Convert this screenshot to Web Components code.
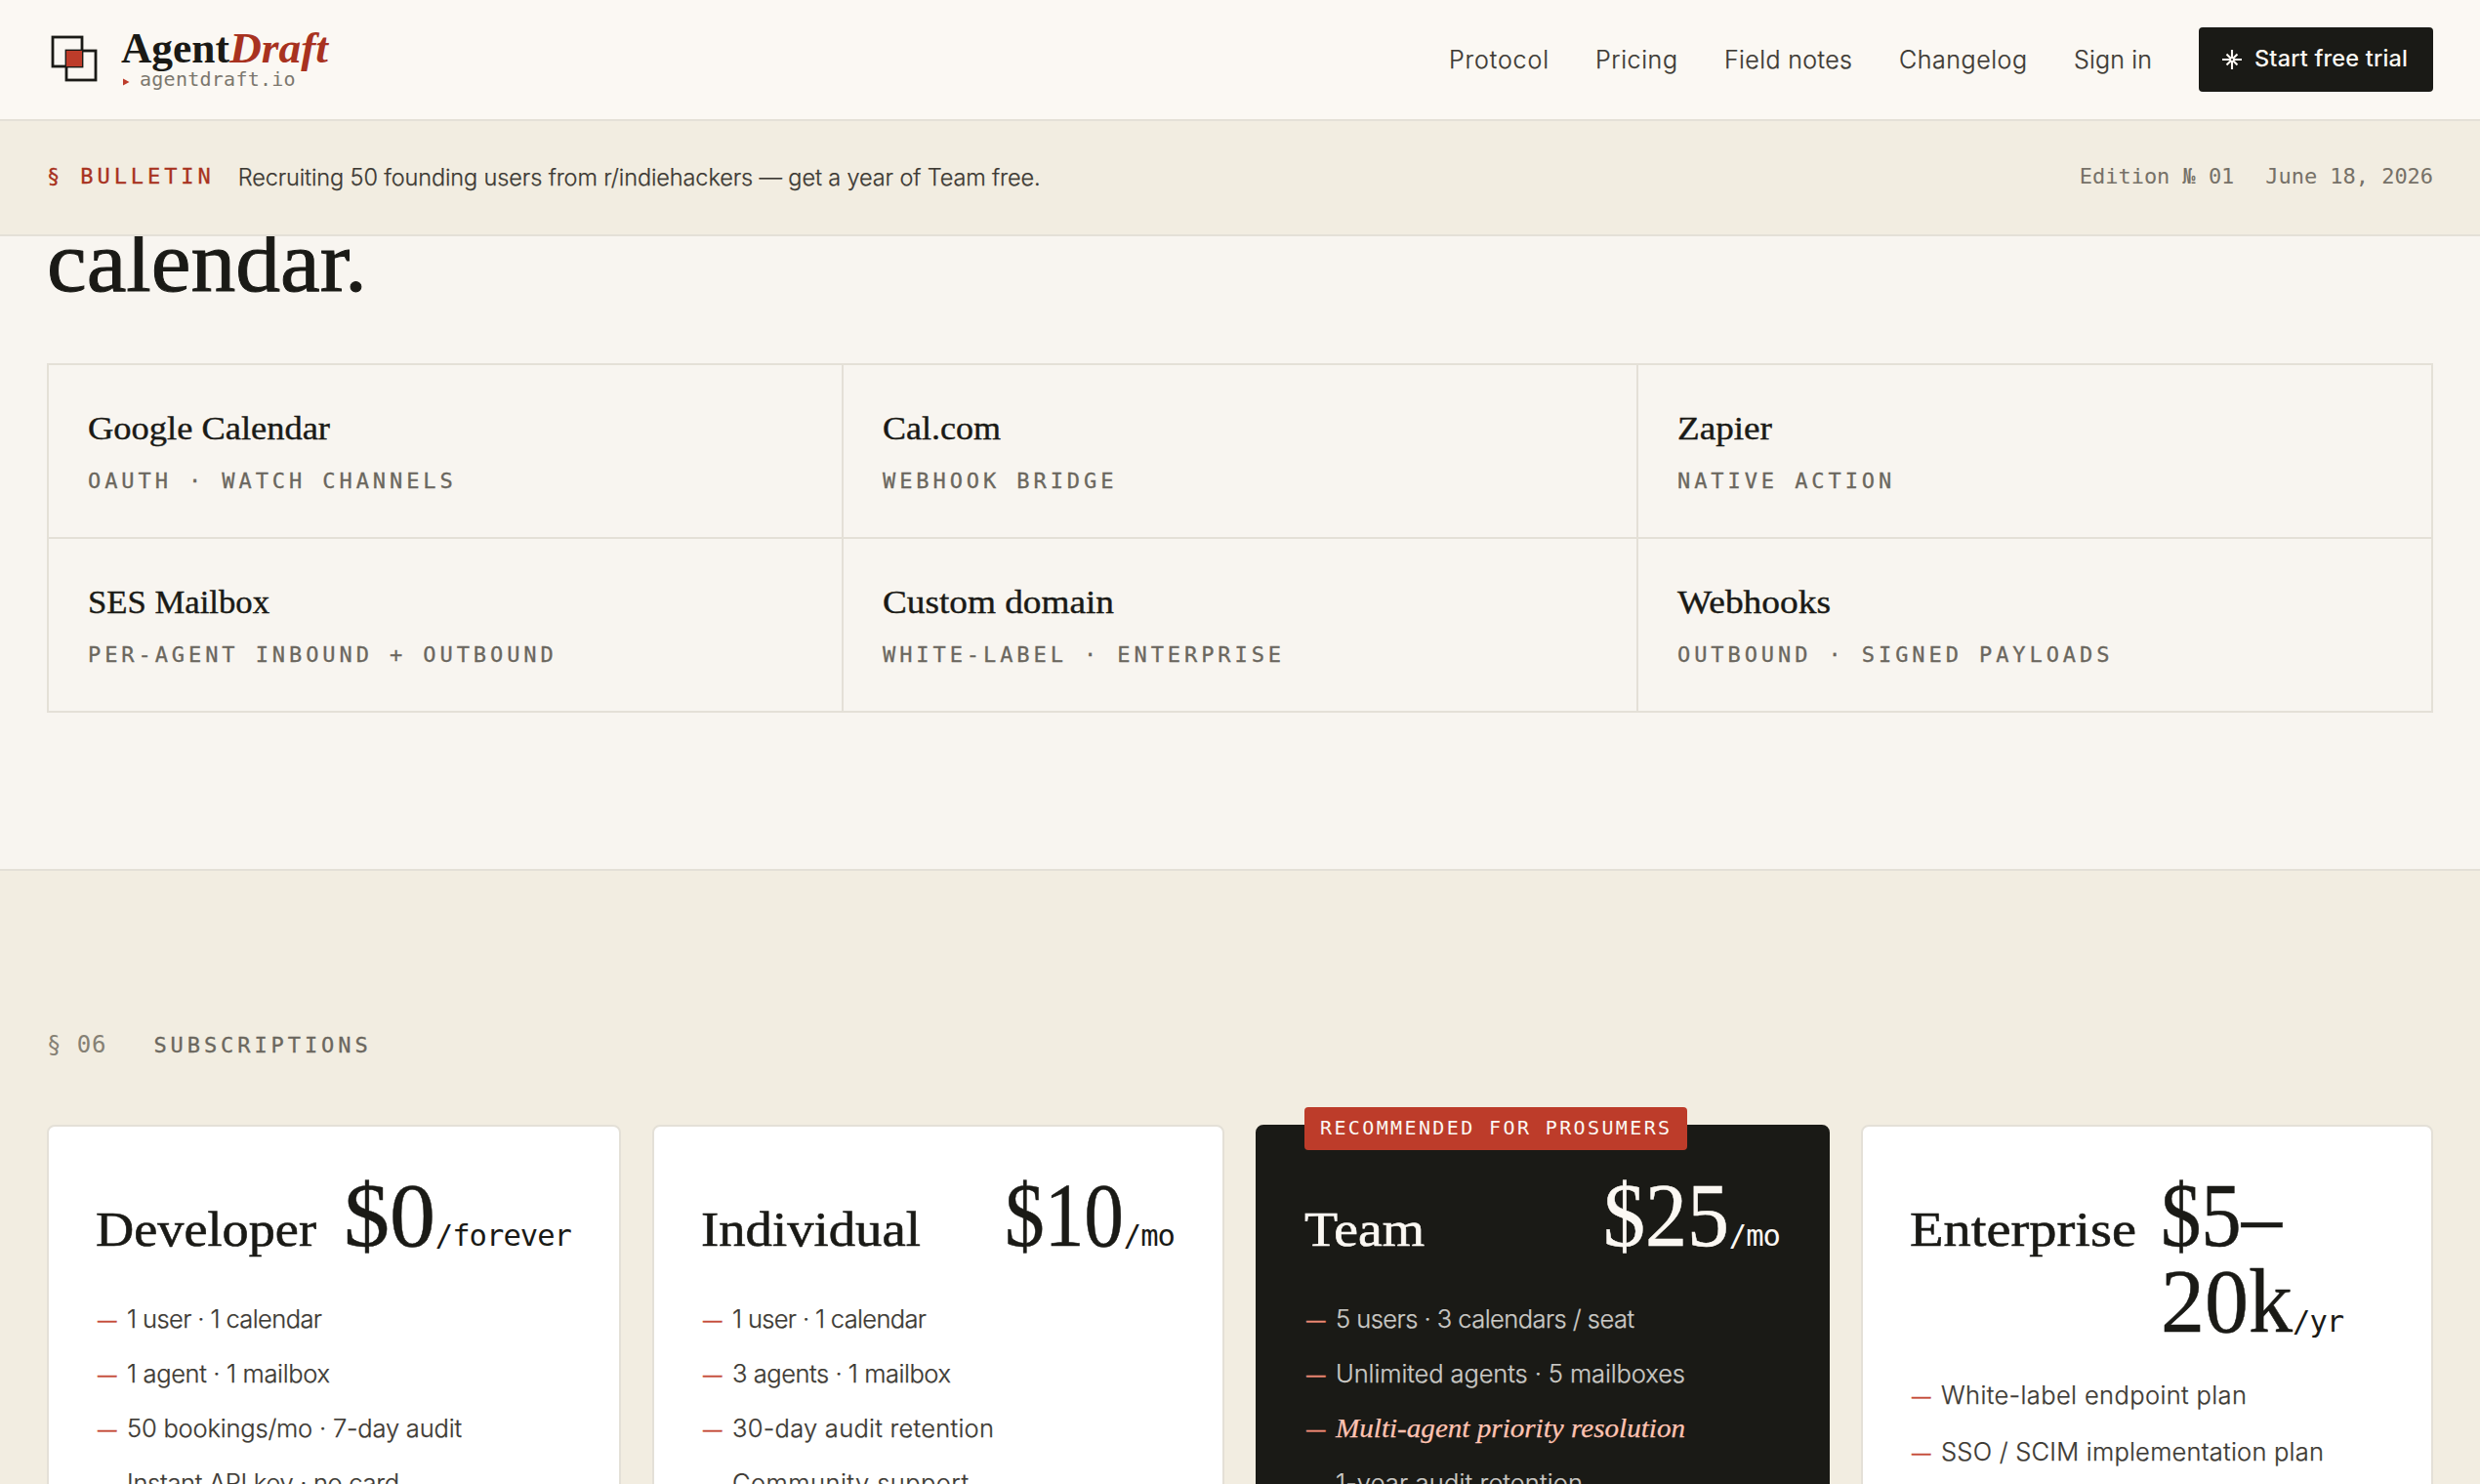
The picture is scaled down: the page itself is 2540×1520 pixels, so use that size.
<!DOCTYPE html>
<html lang="en">
<head>
<meta charset="utf-8">
<title>AgentDraft</title>
<style>
    :root {
        --ink: #1a1a16;
        --body: #3d3a34;
        --muted: #6b675e;
        --red: #bd3c2a;
        --red-deep: #a83220;
        --paper: #fbf8f3;
        --page: #f8f5f0;
        --sand: #f2ede1;
        --line: #e4e0d7;
        --serif: "Liberation Serif", serif;
        --sans: Inter, "Liberation Sans", sans-serif;
        --mono: "DejaVu Sans Mono", "Liberation Mono", monospace;
    }
    body {
        margin: 0;
        height: 1520px;
        overflow: hidden;
        background: var(--page);
        color: var(--ink);
        font-family: var(--sans);
    }
</style>
</head>
<body>

<site-header></site-header>
<site-bulletin></site-bulletin>

<channel-section>
    <fit-text slot="title" w="328" stretch>calendar.</fit-text>
    <channel-cell><fit-text slot="name" w="248" stretch>Google Calendar</fit-text>OAUTH · WATCH CHANNELS</channel-cell>
    <channel-cell><fit-text slot="name" w="121" stretch>Cal.com</fit-text>WEBHOOK BRIDGE</channel-cell>
    <channel-cell><fit-text slot="name" w="97" stretch>Zapier</fit-text>NATIVE ACTION</channel-cell>
    <channel-cell><fit-text slot="name" w="186" stretch>SES Mailbox</fit-text>PER-AGENT INBOUND + OUTBOUND</channel-cell>
    <channel-cell><fit-text slot="name" w="237" stretch>Custom domain</fit-text>WHITE-LABEL · ENTERPRISE</channel-cell>
    <channel-cell><fit-text slot="name" w="157" stretch>Webhooks</fit-text>OUTBOUND · SIGNED PAYLOADS</channel-cell>
</channel-section>

<pricing-section>
    <plan-card>
        <fit-text slot="name" w="226" stretch>Developer</fit-text>
        <fit-text slot="price" w="94" stretch>$0</fit-text>
        <span slot="unit">/forever</span>
        <plan-item><fit-text w="200">1 user · 1 calendar</fit-text></plan-item>
        <plan-item><fit-text w="208">1 agent · 1 mailbox</fit-text></plan-item>
        <plan-item><fit-text w="343">50 bookings/mo · 7-day audit</fit-text></plan-item>
        <plan-item><fit-text w="279">Instant API key · no card</fit-text></plan-item>
    </plan-card>
    <plan-card>
        <fit-text slot="name" w="225" stretch>Individual</fit-text>
        <fit-text slot="price" w="122" stretch>$10</fit-text>
        <span slot="unit">/mo</span>
        <plan-item><fit-text w="199">1 user · 1 calendar</fit-text></plan-item>
        <plan-item><fit-text w="224">3 agents · 1 mailbox</fit-text></plan-item>
        <plan-item><fit-text w="268">30-day audit retention</fit-text></plan-item>
        <plan-item><fit-text w="242">Community support</fit-text></plan-item>
    </plan-card>
    <plan-card class="featured">
        <span slot="badge">RECOMMENDED FOR PROSUMERS</span>
        <fit-text slot="name" w="123" stretch>Team</fit-text>
        <fit-text slot="price" w="129" stretch>$25</fit-text>
        <span slot="unit">/mo</span>
        <plan-item><fit-text w="306">5 users · 3 calendars / seat</fit-text></plan-item>
        <plan-item><fit-text w="358">Unlimited agents · 5 mailboxes</fit-text></plan-item>
        <plan-item class="strong"><fit-text w="358" stretch>Multi-agent priority resolution</fit-text></plan-item>
        <plan-item><fit-text w="253">1-year audit retention</fit-text></plan-item>
    </plan-card>
    <plan-card class="wide">
        <fit-text slot="name" w="232" stretch>Enterprise</fit-text>
        <fit-text slot="price" w="124" stretch>$5–</fit-text>
        <fit-text slot="price2" w="135" stretch>20k</fit-text>
        <span slot="unit">/yr</span>
        <plan-item><fit-text w="313">White-label endpoint plan</fit-text></plan-item>
        <plan-item><fit-text w="392">SSO / SCIM implementation plan</fit-text></plan-item>
    </plan-card>
</pricing-section>

<script>
// attach an open shadow root and fill it
function build(el, html) {
    const template = document.createElement("template");
    template.innerHTML = html;
    el.attachShadow({ mode: "open" }).appendChild(template.content.cloneNode(true));
}

class SiteHeader extends HTMLElement {
    constructor() {
        super();
        build(this, `
<style>
    :host { display: flex; align-items: center; justify-content: space-between; box-sizing: border-box;
        height: 124px; padding: 0 48px; background: var(--paper); border-bottom: 2px solid var(--line); }
    .brand, nav, .cta { display: flex; align-items: center; }
    .brand { gap: 20px; }
    .brand > svg { display: block; margin-top: -2px; }
    .word { font: 700 44px/42px var(--serif); height: 40px; display: flex; }
    .word em { color: var(--red-deep); }
    .tag { display: flex; align-items: center; gap: 10px; height: 24px; font: 20px/24px var(--mono);
        color: #7b776e; letter-spacing: .26px; padding-left: 2px; }
    .tag svg { margin-top: 6px; }
    nav { gap: 48px; font-size: 25px; font-weight: 350; line-height: 40px; color: var(--body);
        -webkit-text-stroke: .25px; }
    .cta { box-sizing: border-box; width: 240px; height: 66px; padding: 0 0 2px 24px; gap: 13px;
        background: var(--ink); color: var(--paper); border-radius: 4px; font-size: 23.5px; font-weight: 500;
        -webkit-text-stroke: 0; }
    .cta svg { margin-top: 1px; }
</style>
<div class="brand">
    <svg width="56" height="56" viewBox="0 0 28 28" fill="none" stroke="#1a1a16" stroke-width="1.4">
        <rect x="3" y="3" width="15" height="15"/>
        <rect x="10" y="10" width="15" height="15"/>
        <rect x="10" y="10" width="8" height="8" fill="#bd3c2a" stroke="none"/>
    </svg>
    <div>
        <div class="word"><fit-text w="111" stretch>Agent</fit-text><em><fit-text w="101" stretch>Draft</fit-text></em></div>
        <div class="tag"><svg width="7" height="8"><path d="M0 .5 6.5 4 0 7.5z" fill="#bd3c2a"/></svg><span>agentdraft.io</span></div>
    </div>
</div>
<nav>
    <fit-text w="102">Protocol</fit-text>
    <fit-text w="84">Pricing</fit-text>
    <fit-text w="131">Field notes</fit-text>
    <fit-text w="131">Changelog</fit-text>
    <fit-text w="80">Sign in</fit-text>
    <div class="cta">
        <svg width="20" height="20" viewBox="-10 -10 20 20" stroke="#fbf8f3" stroke-width="2.1" fill="#1a1a16">
            <path d="M0-10V10M-10 0H10M-5.5-5.5 5.5 5.5M5.5-5.5-5.5 5.5"/>
            <circle r="1" stroke="none"/>
        </svg>
        <fit-text w="157">Start free trial</fit-text>
    </div>
</nav>`);
    }
}

class SiteBulletin extends HTMLElement {
    constructor() {
        super();
        build(this, `
<style>
    :host { display: flex; align-items: center; box-sizing: border-box; height: 118px; padding: 0 48px;
        background: var(--sand); border-bottom: 2px solid var(--line); font-size: 23.5px; font-weight: 350;
        color: var(--body); }
    .mono { font: 22px/30px var(--mono); padding-bottom: 3px; letter-spacing: -.04px; color: #767168; }
    .label { color: var(--red-deep); letter-spacing: 3.92px; margin-right: 24px; -webkit-text-stroke: .3px; }
    .right { margin-left: auto; display: flex; gap: 32px; }
    fit-text { padding-bottom: 2px; -webkit-text-stroke: .25px; }
</style>
<span class="mono label">§ BULLETIN</span>
<fit-text w="822">Recruiting 50 founding users from r/indiehackers — get a year of Team free.</fit-text>
<div class="right"><span class="mono">Edition № 01</span><span class="mono">June 18, 2026</span></div>`);
    }
}

class ChannelSection extends HTMLElement {
    constructor() {
        super();
        build(this, `
<style>
    :host { display: block; overflow: hidden; padding: 0 48px 160px; }
    /* short line box: the sticky bars cover the top of the heading */
    h2 { margin: 0 0 77px; font: 400 89px/53px var(--serif); height: 53px; -webkit-text-stroke: 1px; }
    .grid { display: grid; grid-template-columns: repeat(3, 1fr); grid-auto-rows: 176px; gap: 2px;
        padding: 2px; background: var(--line); }
</style>
<h2><slot name="title"></slot></h2>
<div class="grid"><slot></slot></div>`);
    }
}

class ChannelCell extends HTMLElement {
    constructor() {
        super();
        build(this, `
<style>
    :host { display: block; box-sizing: border-box; padding: 45px 40px 0; background: var(--page); }
    h3 { margin: 0 0 19px; height: 40px; font: 400 34px/40px var(--serif); -webkit-text-stroke: .4px; }
    p { margin: 0; font: 22px/30px var(--mono); letter-spacing: 3.92px; color: var(--muted);
        -webkit-text-stroke: .3px; }
</style>
<h3><slot name="name"></slot></h3>
<p><slot></slot></p>`);
    }
}

class PricingSection extends HTMLElement {
    constructor() {
        super();
        build(this, `
<style>
    :host { display: block; padding: 163px 48px 0; background: var(--sand); border-top: 2px solid var(--line); }
    header { display: flex; align-items: baseline; gap: 48px; height: 30px; margin-bottom: 67px;
        font: 22px/30px var(--mono); letter-spacing: 3.92px; color: var(--muted); -webkit-text-stroke: .3px; }
    .num { font-size: 24px; letter-spacing: .9px; color: #858074; -webkit-text-stroke: 0; }
    .plans { display: grid; grid-template-columns: 588px 586px 588px 586px; gap: 32px; height: 368px; }
</style>
<header><span class="num">§ 06</span><span>SUBSCRIPTIONS</span></header>
<div class="plans"><slot></slot></div>`);
    }
}

class PlanCard extends HTMLElement {
    constructor() {
        super();
        build(this, `
<style>
    :host { display: block; position: relative; box-sizing: border-box; height: 620px; padding: 47px 49px 47px 48px;
        background: #fff; border: 2px solid var(--line); border-radius: 8px; --gap: 16px; --after: 42px; }
    :host(.featured) { background: var(--ink); border-color: var(--ink); color: var(--paper);
        --body: #cac9c5; --dash: #ee8a74; }
    :host(.wide) { --gap: 18px; --after: 32px; }
    header { display: flex; align-items: baseline; justify-content: space-between; margin-bottom: var(--after); }
    h3 { margin: 0; font: 400 50px/60px var(--serif); -webkit-text-stroke: .6px; }
    .price { font: 400 93px/88px var(--serif); white-space: nowrap; -webkit-text-stroke: .5px; }
    :host(.wide) .price { width: 228px; }
    .unit { font: 30.5px/32px var(--mono); letter-spacing: -.96px; -webkit-text-stroke: 0; }
    .list { display: flex; flex-direction: column; gap: var(--gap); }
    .badge { position: absolute; left: 48px; top: -20px; }
    ::slotted([slot=badge]) { display: block; box-sizing: border-box; width: 392px; height: 44px;
        padding-left: 16px; background: var(--red); border-radius: 4px; color: var(--paper);
        font: 20px/42px var(--mono); letter-spacing: 2.38px; white-space: nowrap; }
</style>
<div class="badge"><slot name="badge"></slot></div>
<header>
    <h3><slot name="name"></slot></h3>
    <div class="price"><slot name="price"></slot><br hidden><slot name="price2"></slot><span class="unit"><slot name="unit"></slot></span></div>
</header>
<div class="list"><slot></slot></div>`);
        // a price range breaks after the dash
        if (this.classList.contains("wide")) {
            this.shadowRoot.querySelector("br").hidden = false;
        }
    }
}

class PlanItem extends HTMLElement {
    constructor() {
        super();
        build(this, `
<style>
    :host { display: flex; height: 40px; font-size: 25.5px; font-weight: 350; line-height: 40px; color: var(--body);
        -webkit-text-stroke: .25px; }
    :host(.strong) { font: italic 27px/40px var(--serif); color: #ffc3b2; }
    i { font: 400 19.5px/43px "Liberation Sans", sans-serif; width: 32px; padding-left: 2px; box-sizing: border-box;
        color: var(--dash, #c54a38); flex: none; -webkit-text-stroke: .4px; }
</style>
<i>—</i><slot></slot>`);
    }
}

// text set to a given width: by its letter spacing, or by widening the letters
class FitText extends HTMLElement {
    constructor() {
        super();
        build(this, `
<style>
    :host { display: inline-block; white-space: nowrap; }
    span { display: inline-block; transform-origin: 0 0; }
</style>
<span><slot></slot></span>`);
    }

    connectedCallback() {
        const w = Number(this.getAttribute("w"));
        const span = this.shadowRoot.querySelector("span");
        const natural = span.getBoundingClientRect().width;
        if (this.hasAttribute("stretch")) {
            span.style.transform = `scaleX(${w / natural})`;
        }
        else {
            span.style.letterSpacing = (w - natural) / (this.textContent.length - 1) + "px";
        }
        this.style.width = w + "px";
    }
}

customElements.define("site-header", SiteHeader);
customElements.define("site-bulletin", SiteBulletin);
customElements.define("channel-section", ChannelSection);
customElements.define("channel-cell", ChannelCell);
customElements.define("pricing-section", PricingSection);
customElements.define("plan-card", PlanCard);
customElements.define("plan-item", PlanItem);
// last, so it measures with every parent style in place
customElements.define("fit-text", FitText);
</script>
</body>
</html>
